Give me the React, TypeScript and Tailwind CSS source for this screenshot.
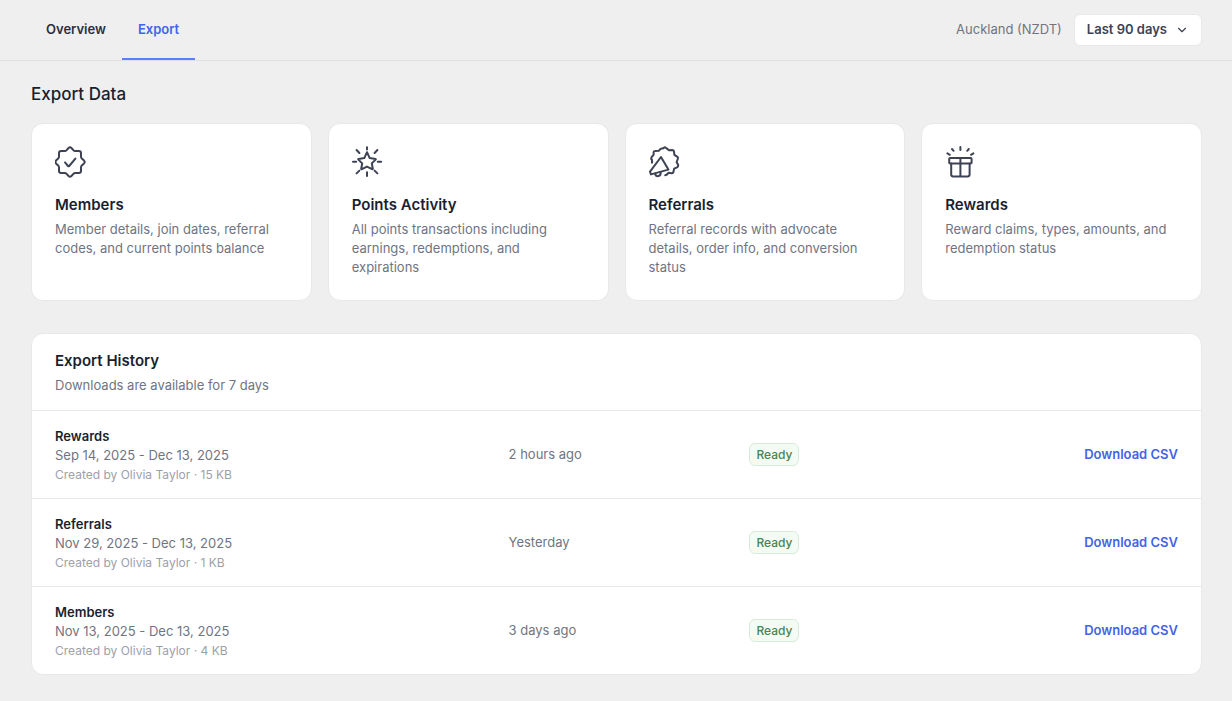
import { ChevronDown } from 'lucide-react';
import type { ReactNode } from 'react';

// ── Icons ──────────────────────────────────────────────────────────────────────
const Svg = ({ viewBox = '0 0 32 32', children }: { viewBox?: string; children: ReactNode }) => (
  <svg width="32" height="32" viewBox={viewBox} fill="none" stroke="currentColor" strokeWidth="2" strokeLinecap="round" strokeLinejoin="round" aria-hidden="true">
    {children}
  </svg>
);

const Icon = {
  Verified: () => (
    <Svg viewBox="1 0 32 32">
      <path d="M14.6 2Q16 .6 17.4 2L19.4 4.2Q20.2 5 21.4 5L24.8 5Q27 5 27 7.2L27 10.6Q27 11.8 27.8 12.6L30 14.6Q31.4 16 30 17.4L27.8 19.4Q27 20.2 27 21.4L27 24.8Q27 27 24.8 27L21.4 27Q20.2 27 19.4 27.8L17.4 30Q16 31.4 14.6 30L12.6 27.8Q11.8 27 10.6 27L7.2 27Q5 27 5 24.8L5 21.4Q5 20.2 4.2 19.4L2 17.4Q1 16 2 14.6L4.2 12.6Q5 11.8 5 10.6L5 7.2Q5 5 7.2 5L10.6 5Q11.8 5 12.6 4.2Z"/>
      <path d="M11 16.4l3 3.6q.6.7 1.2 0l6.2-7.4"/>
    </Svg>
  ),
  Star: () => (
    <Svg viewBox="1 0 32 32">
      <path d="M16 6.2l2.7 5.9 5.8.8q.6.2.1.7l-3.8 3.8 1 5.4q0 .7-.7.4L16 20.6l-5.1 2.6q-.7.3-.7-.4l1-5.4-3.8-3.8q-.5-.5.1-.7l5.8-.8z"/>
      <path d="M16 1.2v2.2M16 26.2v3.8M2 15.8h3.2M26.8 15.8h3.4M23.6 7l2.8-3M8.4 7l-2.8-3M23.6 24.6l2.8 2.8M8.4 24.6l-2.8 2.8"/>
    </Svg>
  ),
  Megaphone: () => (
    <Svg viewBox="1 0 32 32">
      <path d="M4 16.7V14Q2.6 12.4 3.6 11L5.6 8.8V6.2Q5.8 4.9 7.2 4.9L10.8 4.8 12.6 2.9Q13.6 2.2 14.6 2.6L16.6 1.2 19 2.6 21 4.2 24.4 4.1Q25.9 4.3 26 5.6L26.4 8.8 29.4 10.8Q30.4 11.8 29.8 13L28.6 16 30.2 19Q30.4 20.6 29 21.3L26.2 22.6 25.4 26Q24.8 27.4 23.4 27.2L20.6 26.7 18.6 28.8 17.2 29.2"/>
      <path d="M13 11L2 25.6l1 2.8L20.4 23.6z"/>
      <path d="M7 27.4q.8 3.2 3.4 2.7 2.6-.6 2.2-4"/>
    </Svg>
  ),
  Gift: () => (
    <Svg>
      <rect x="4.2" y="12" width="22.4" height="5.6" rx="1"/>
      <path d="M6.2 17.6V28.6Q6.2 30.4 8 30.4H22.8Q24.6 30.4 24.6 28.6V17.6M15.4 12V30.4"/>
      <path d="M15.4 1v3M7 3l1.6 1.8M23.8 3l-1.6 1.8M2.4 7.4l2.4 1.4M28.4 7.4l-2.4 1.4"/>
    </Svg>
  ),
};

const EXPORTS = [
  { title: 'Members', text: 'Member details, join dates, referral codes, and current points balance', icon: Icon.Verified },
  { title: 'Points Activity', text: 'All points transactions including earnings, redemptions, and expirations', icon: Icon.Star },
  { title: 'Referrals', text: 'Referral records with advocate details, order info, and conversion status', icon: Icon.Megaphone },
  { title: 'Rewards', text: 'Reward claims, types, amounts, and redemption status', icon: Icon.Gift },
];

const HISTORY = [
  { name: 'Rewards', range: 'Sep 14, 2025 - Dec 13, 2025', meta: 'Created by Olivia Taylor · 15 KB', when: '2 hours ago' },
  { name: 'Referrals', range: 'Nov 29, 2025 - Dec 13, 2025', meta: 'Created by Olivia Taylor · 1 KB', when: 'Yesterday' },
  { name: 'Members', range: 'Nov 13, 2025 - Dec 13, 2025', meta: 'Created by Olivia Taylor · 4 KB', when: '3 days ago' },
];

// ── Page ───────────────────────────────────────────────────────────────────────

export default function App() {
  return (
    <div className="min-h-screen bg-[#efefef] font-['Inter',sans-serif] text-[13px] text-[#6f7484]">
      <header className="flex justify-between border-b border-[#dedfe4] px-[30px]">
        <nav className="flex font-semibold">
          <a href="#overview" className="border-b-2 border-transparent px-4 py-[19px] leading-5 text-[#2b2f40]">Overview</a>
          <a href="#export" aria-current="page" className="border-b-2 border-[#5b80fb] px-4 py-[19px] leading-5 text-[#4263eb]">Export</a>
        </nav>
        <div className="flex items-center gap-3">
          <span>Auckland (NZDT)</span>
          <button type="button" className="flex h-8 items-center gap-2 rounded-md border border-[#e8e8ea] bg-white px-3 font-semibold text-[#3d4254]">
            Last 90 days
            <ChevronDown size={14} />
          </button>
        </div>
      </header>

      <main className="pt-5 pr-[30px] pb-7 pl-[31px]">
        <h1 className="text-[17px] leading-[26px] font-medium text-[#1a1f30]">Export Data</h1>

        <div className="mt-4 grid grid-cols-4 gap-4">
          {EXPORTS.map(({ title, text, icon: CardIcon }) => (
            <button
              key={title}
              type="button"
              className="flex min-h-[178px] flex-col items-start rounded-xl border border-[#e8e8ea] bg-white px-[23px] py-[22px] text-left"
            >
              <span className="text-[#3d4254]"><CardIcon /></span>
              <span className="mt-[15px] text-[15px] leading-6 font-semibold text-[#1a1f30]">{title}</span>
              <span className="mt-[3px] leading-[19px]">{text}</span>
            </button>
          ))}
        </div>

        <section className="mt-8 overflow-hidden rounded-xl border border-[#e8e8ea] bg-white">
          <div className="px-[23px] py-[15px]">
            <h2 className="text-[15px] leading-6 font-semibold text-[#1a1f30]">Export History</h2>
            <p className="mt-[2px] leading-5">Downloads are available for 7 days</p>
          </div>

          <table className="w-full table-fixed">
            <tbody>
              {HISTORY.map(row => (
                <tr key={row.name} className="border-t border-[#e8e8ea]">
                  <td className="w-[38.8%] px-[23px] pt-[15px] pb-[13px]">
                    <p className="leading-5 font-semibold text-[#1a1f30]">{row.name}</p>
                    <p className="leading-[19px]">{row.range}</p>
                    <p className="text-xs leading-5 text-[#9da0ab]">{row.meta}</p>
                  </td>
                  <td className="w-[20.6%] px-[23px]">{row.when}</td>
                  <td className="px-[23px]">
                    <span className="inline-block rounded-md border border-[#d5ecd9] bg-[#f4fbf5] px-[6px] text-xs leading-[21px] font-medium text-[#4a8450]">
                      Ready
                    </span>
                  </td>
                  <td className="px-[23px] text-right">
                    <a href="#download" className="font-semibold text-[#4263eb]">Download CSV</a>
                  </td>
                </tr>
              ))}
            </tbody>
          </table>
        </section>
      </main>
    </div>
  );
}
